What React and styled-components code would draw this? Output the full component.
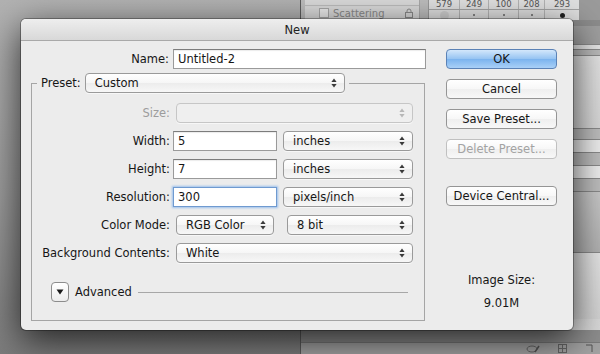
import React from "react"
import styled, {createGlobalStyle} from "styled-components"

const GlobalStyles = createGlobalStyle`
  html, body {
    margin: 0;
    padding: 0;
  }
  body {
    width: 600px;
    height: 354px;
    overflow: hidden;
    font-family: "DejaVu Sans", Verdana, sans-serif;
    font-size: 11.5px;
    color: #161616;
  }
`

const Desktop = styled.div`
  position: relative;
  width: 600px;
  height: 354px;
  overflow: hidden;
  background: linear-gradient(180deg, #b2b2b2 0%, #9c9c9c 55%, #7c7c7c 100%);
`

/* photoshop panel dock behind the dialog */
const Dock = styled.div`
  position: absolute;
  left: 300px;
  top: 0;
  width: 300px;
  height: 354px;
  display: flex;
  flex-direction: column;
  border-left: 1px solid #5c5c5c;
  background: #c4c4c4;
`

const DockTop = styled.div`
  height: 20px;
  display: flex;
  background: #bdbdbd;
`

const StylesList = styled.div`
  width: 114px;
  margin-left: 4px;
  display: flex;
  flex-direction: column;
  background: #dadada;
  border-right: 1px solid #a9a9a9;
`

const StyleRow = styled.div`
  height: ${p => p.h}px;
  display: flex;
  align-items: center;
  gap: 4px;
  padding: 0 6px 0 14px;
  border-bottom: ${p => (p.line ? "1px solid #bcbcbc" : "none")};
  color: #8a8a8a;
  font-size: 10px;
`

const Check = styled.span`
  width: 8px;
  height: 8px;
  border: 1px solid #a8a8a8;
  background: #ececec;
`

const StyleName = styled.span`
  flex: 1;
`

const Table = styled.div`
  width: 150px;
  margin-left: 8px;
  display: flex;
  flex-direction: column;
  background: #e0e0e0;
  border-left: 1px solid #9a9a9a;
  border-right: 1px solid #9a9a9a;
`

const TableRow = styled.div`
  height: ${p => p.h}px;
  display: grid;
  grid-template-columns: 31px 29px 30px 26px 1fr;
  border-bottom: ${p => (p.line ? "1px solid #a5a5a5" : "none")};
`

const Cell = styled.div`
  display: flex;
  align-items: center;
  justify-content: center;
  border-right: 1px solid #b4b4b4;
  font-size: 8.5px;
  line-height: 9px;
  color: #555;
  &:last-child {
    border-right: none;
  }
`

const Dot = styled.span`
  width: ${p => p.s}px;
  height: ${p => p.s}px;
  border-radius: 50%;
  background: ${p => p.c};
`

const DockRight = styled.div`
  flex: 1;
  background: #9b9b9b;
`

const DockMid = styled.div`
  flex: 1;
  display: flex;
  flex-direction: column;
  background: linear-gradient(180deg, #dcdcdc, #e6e6e6 40%, #d8d8d8);
`

const Band = styled.div`
  height: ${p => p.h}px;
  background: ${p => p.bg};
  border-bottom: ${p => (p.line ? "1px solid #8a8a8a" : "none")};
`

const DockBottom = styled.div`
  height: 24px;
  display: flex;
  flex-direction: column;
  background: #8d8d8d;
`

const BottomTop = styled.div`
  height: 12px;
  border-bottom: 1px solid #7a7a7a;
`

const BottomIcons = styled.div`
  flex: 1;
  display: flex;
  justify-content: flex-end;
  align-items: center;
  gap: 18px;
  padding-right: 8px;
  background: #a3a3a3;
`

/* dialog window */
const Dialog = styled.div`
  position: absolute;
  left: 21px;
  top: 19px;
  width: 552px;
  height: 311px;
  display: flex;
  flex-direction: column;
  border-radius: 5px;
  overflow: hidden;
  background: #ececec;
  box-shadow: 0 10px 36px rgba(0, 0, 0, 0.75), 0 0 0 1px rgba(0, 0, 0, 0.3);
`

const TitleBar = styled.div`
  height: 21px;
  display: flex;
  align-items: center;
  justify-content: center;
  background: linear-gradient(180deg, #eeeeee, #d8d8d8);
  border-bottom: 1px solid #a9a9a9;
  color: #222;
`

const Body = styled.div`
  flex: 1;
  display: flex;
  gap: 20px;
  padding: 8px 0 0 10px;
`

const LeftCol = styled.div`
  width: 395px;
  display: flex;
  flex-direction: column;
`

const NameRow = styled.div`
  display: flex;
  align-items: center;
  gap: 4px;
`

const Label = styled.label`
  width: ${p => p.w || 138}px;
  text-align: right;
  white-space: nowrap;
  color: ${p => (p.disabled ? "#9c9c9c" : "#161616")};
`

const Input = styled.div`
  box-sizing: border-box;
  width: ${p => p.w}px;
  height: 20px;
  display: flex;
  align-items: center;
  padding-left: 4px;
  background: #fff;
  border: 1px solid ${p => (p.focus ? "#6f9ad0" : "#9a9a9a")};
  border-top-color: ${p => (p.focus ? "#6f9ad0" : "#7c7c7c")};
  box-shadow: ${p => (p.focus ? "0 0 2px 1px #9cc0ec" : "inset 0 1px 1px rgba(0,0,0,0.08)")};
  white-space: nowrap;
`

const Group = styled.fieldset`
  box-sizing: border-box;
  width: 394px;
  margin: 4px 0 0;
  padding: 0 11px 18px 0;
  border: 1px solid #a5a5a5;
  min-inline-size: 0;
`

const Legend = styled.legend`
  display: flex;
  align-items: center;
  gap: 4px;
  margin-left: 5px;
  padding: 0 4px;
`

const SelectBox = styled.div`
  box-sizing: border-box;
  width: ${p => p.w}px;
  height: 20px;
  margin-left: ${p => p.ml || 0}px;
  display: flex;
  align-items: center;
  justify-content: space-between;
  padding: 0 7px 0 9px;
  border: 1px solid ${p => (p.disabled ? "#c6c6c6" : "#9a9a9a")};
  border-radius: 4px;
  background: ${p =>
    p.disabled ? "#efefef" : "linear-gradient(180deg, #ffffff, #f6f6f6 50%, #ececec 51%, #f7f7f7)"};
  box-shadow: 0 1px 0 rgba(255, 255, 255, 0.6);
  color: ${p => (p.disabled ? "#a0a0a0" : "#161616")};
  white-space: nowrap;
`

const Rows = styled.div`
  display: grid;
  grid-template-columns: 138px 1fr;
  column-gap: 3px;
  row-gap: 8px;
  align-items: center;
  margin-top: 10px;
`

const Controls = styled.div`
  display: flex;
  align-items: center;
  gap: ${p => p.gap || 6}px;
`

const AdvancedRow = styled.div`
  height: 20px;
  display: flex;
  align-items: center;
  gap: 6px;
  margin: 19px 5px 0 19px;
`

const Disclosure = styled.div`
  box-sizing: border-box;
  width: 18px;
  height: 20px;
  display: flex;
  align-items: center;
  justify-content: center;
  border: 1px solid #8c8c8c;
  border-radius: 4px;
  background: linear-gradient(180deg, #ffffff, #ececec);
`

const Rule = styled.div`
  flex: 1;
  height: 1px;
  margin-top: 1px;
  background: #a7a7a7;
`

const RightCol = styled.div`
  width: 111px;
  display: flex;
  flex-direction: column;
  gap: 10px;
`

const Button = styled.div`
  box-sizing: border-box;
  height: 20px;
  margin-top: ${p => p.mt || 0}px;
  display: flex;
  align-items: center;
  justify-content: center;
  border-radius: 4px;
  border: 1px solid ${p => (p.primary ? "#5b82b6" : p.disabled ? "#c0c0c0" : "#959595")};
  background: ${p =>
    p.primary
      ? "linear-gradient(180deg, #d3e7fb, #95c3f2 50%, #7bb3ee 51%, #a9d0f7)"
      : "linear-gradient(180deg, #ffffff, #f7f7f7 50%, #efefef 51%, #f8f8f8)"};
  color: ${p => (p.disabled ? "#a3a3a3" : "#161616")};
  white-space: nowrap;
`

const SizeInfo = styled.div`
  margin-top: 57px;
  display: flex;
  flex-direction: column;
  align-items: center;
  gap: 9px;
  line-height: 14px;
`

function Arrows({disabled}) {
  const c = disabled ? "#b8b8b8" : "#3a3a3a"
  return (
    <svg width="6" height="10" viewBox="0 0 6 10">
      <path d="M3 0.5 L5.6 4 L0.4 4 Z" fill={c} />
      <path d="M3 9.5 L5.6 6 L0.4 6 Z" fill={c} />
    </svg>
  )
}

function Select({w, ml, disabled, children}) {
  return (
    <SelectBox w={w} ml={ml} disabled={disabled}>
      <span>{children}</span>
      <Arrows disabled={disabled} />
    </SelectBox>
  )
}

function Lock() {
  return (
    <svg width="8" height="10" viewBox="0 0 8 10">
      <path d="M2 4.5 V3 a2 2 0 0 1 4 0 V4.5" fill="none" stroke="#8a8a8a" strokeWidth="1" />
      <rect x="0.5" y="4.5" width="7" height="5" fill="none" stroke="#8a8a8a" />
    </svg>
  )
}

export default function App() {
  return (
    <>
      <GlobalStyles />
      <Desktop>
        <Dock>
          <DockTop>
            <StylesList>
              <StyleRow h={5} line />
              <StyleRow h={14}>
                <Check />
                <StyleName>Scattering</StyleName>
                <Lock />
              </StyleRow>
            </StylesList>
            <Table>
              <TableRow h={9} line>
                <Cell>579</Cell>
                <Cell>249</Cell>
                <Cell>100</Cell>
                <Cell>208</Cell>
                <Cell>293</Cell>
              </TableRow>
              <TableRow h={11}>
                <Cell><Dot s={9} c="#cfcfcf" /></Cell>
                <Cell><Dot s={2} c="#666" /></Cell>
                <Cell><Dot s={2} c="#666" /></Cell>
                <Cell><Dot s={2} c="#666" /></Cell>
                <Cell><Dot s={5} c="#222" /></Cell>
              </TableRow>
            </Table>
            <DockRight />
          </DockTop>
          <DockMid>
            <Band h={6} bg="#8c8c8c" />
            <Band h={18} bg="#9e9e9e" line />
            <Band h={4} bg="#e4e4e4" line />
            <Band h={5} bg="#b9b9b9" line />
            <Band h={72} bg="linear-gradient(180deg,#e2e2e2,#d6d6d6)" line />
            <Band h={10} bg="#bdbdbd" line />
            <Band h={12} bg="#ececec" line />
            <Band h={12} bg="#bcbcbc" line />
            <Band h={12} bg="#ededed" line />
            <Band h={12} bg="#bdbdbd" line />
            <Band h={60} bg="linear-gradient(180deg,#c8c8c8,#b0b0b0)" line />
            <Band h={66} bg="linear-gradient(180deg,#e4e4e4,#d2d2d2)" />
          </DockMid>
          <DockBottom>
            <BottomTop />
            <BottomIcons>
              <svg width="14" height="8" viewBox="0 0 14 8">
                <ellipse cx="6" cy="4" rx="5" ry="3" fill="none" stroke="#666" />
                <path d="M9 7 L13 1" stroke="#555" strokeWidth="1.5" />
              </svg>
              <svg width="9" height="9" viewBox="0 0 9 9">
                <rect x="0.5" y="0.5" width="8" height="8" fill="none" stroke="#666" />
                <path d="M0.5 4.5 H8.5 M4.5 0.5 V8.5" stroke="#666" />
              </svg>
              <svg width="8" height="9" viewBox="0 0 8 9">
                <path d="M1 1 H7 V8" fill="none" stroke="#555" />
              </svg>
            </BottomIcons>
          </DockBottom>
        </Dock>

        <Dialog>
          <TitleBar>New</TitleBar>
          <Body>
            <LeftCol>
              <NameRow>
                <Label>Name:</Label>
                <Input w={253}>Untitled-2</Input>
              </NameRow>
              <Group>
                <Legend>
                  <span>Preset:</span>
                  <Select w={260}>Custom</Select>
                </Legend>
                <Rows>
                  <Label disabled>Size:</Label>
                  <Select w={237} ml={3} disabled />

                  <Label>Width:</Label>
                  <Controls>
                    <Input w={104}>5</Input>
                    <Select w={130}>inches</Select>
                  </Controls>

                  <Label>Height:</Label>
                  <Controls>
                    <Input w={104}>7</Input>
                    <Select w={130}>inches</Select>
                  </Controls>

                  <Label>Resolution:</Label>
                  <Controls>
                    <Input w={104} focus>300</Input>
                    <Select w={130}>pixels/inch</Select>
                  </Controls>

                  <Label>Color Mode:</Label>
                  <Controls gap={13}>
                    <Select w={98} ml={3}>RGB Color</Select>
                    <Select w={126}>8 bit</Select>
                  </Controls>

                  <Label>Background Contents:</Label>
                  <Select w={237} ml={3}>White</Select>
                </Rows>
                <AdvancedRow>
                  <Disclosure>
                    <svg width="8" height="6" viewBox="0 0 8 6">
                      <path d="M0.5 0.5 H7.5 L4 5.5 Z" fill="#1a1a1a" />
                    </svg>
                  </Disclosure>
                  <span>Advanced</span>
                  <Rule />
                </AdvancedRow>
              </Group>
            </LeftCol>
            <RightCol>
              <Button primary>OK</Button>
              <Button>Cancel</Button>
              <Button>Save Preset...</Button>
              <Button disabled>Delete Preset...</Button>
              <Button mt={17}>Device Central...</Button>
              <SizeInfo>
                <span>Image Size:</span>
                <span>9.01M</span>
              </SizeInfo>
            </RightCol>
          </Body>
        </Dialog>
      </Desktop>
    </>
  )
}
